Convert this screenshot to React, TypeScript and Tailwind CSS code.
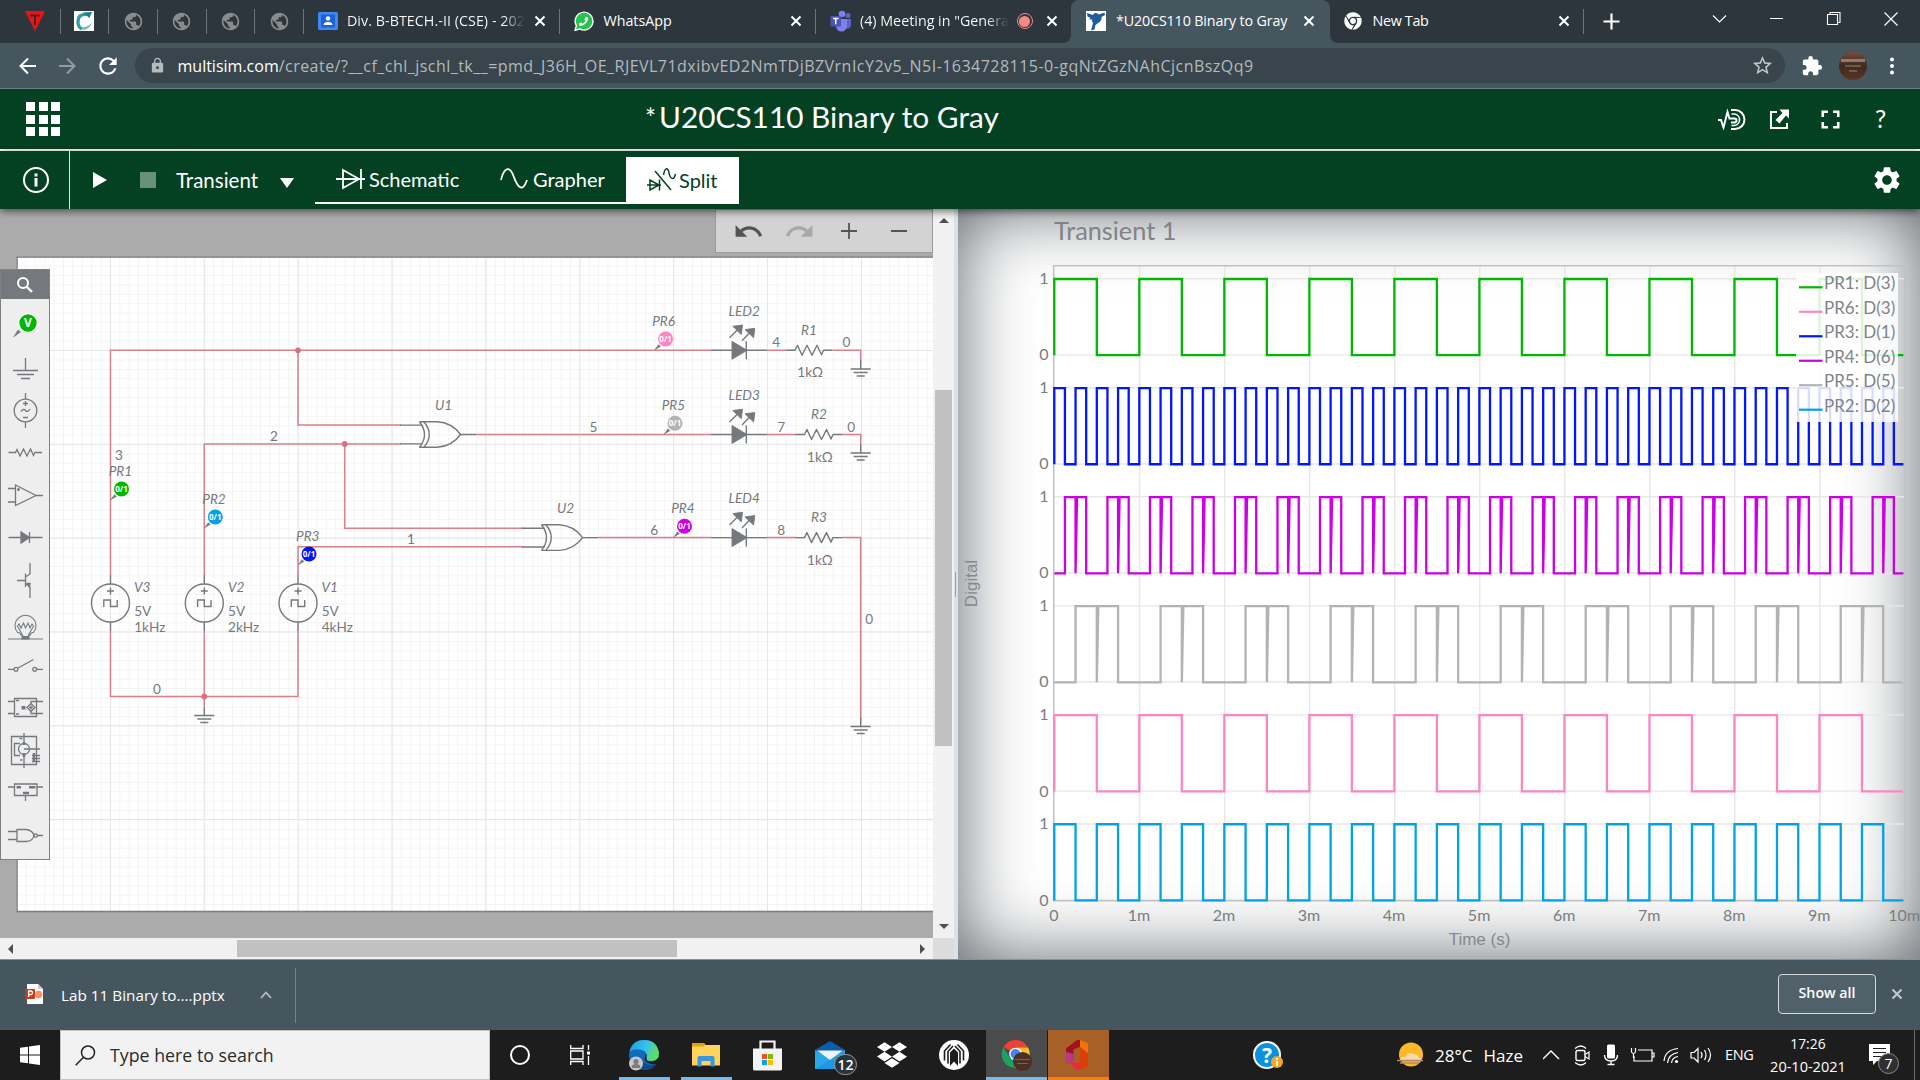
import { type ReactNode } from "react";
import { FaChrome, FaDropbox, FaPhoneAlt } from "react-icons/fa";
import {
  MdExtension,
  MdFullscreen,
  MdLock,
  MdOutlineStarBorder,
  MdPublic,
  MdRedo,
  MdRefresh,
  MdSettings,
  MdUndo,
} from "react-icons/md";

/* ---------- Browser tab strip ---------- */

function Cross({ className = "" }: { className?: string }) {
  return (
    <svg viewBox="0 0 12 12" className={`h-3 w-3 shrink-0 ${className}`} stroke="currentColor" strokeWidth="2" fill="none">
      <path d="M1.5 1.5 10.5 10.5M10.5 1.5 1.5 10.5" />
    </svg>
  );
}

function TabDivider() {
  return <span className="absolute right-0 h-[25px] w-px bg-[#68757c]" />;
}

function PinnedTab({ children }: { children: ReactNode }) {
  return (
    <div className="relative flex h-full w-[48.7px] items-center justify-center pr-px">
      {children}
      <TabDivider />
    </div>
  );
}

function WhatsAppIcon() {
  return (
    <span className="relative flex h-5 w-5 items-center justify-center">
      <svg viewBox="0 0 20 20" className="absolute inset-0">
        <path d="M1 19.5 2.4 14.6A8.9 8.9 0 1 1 5.8 17.9Z" fill="#27c24c" stroke="#fff" strokeWidth="1.4" />
      </svg>
      <FaPhoneAlt className="relative h-[9px] w-[9px] -scale-x-100 text-white" />
    </span>
  );
}

function TeamsIcon() {
  return (
    <svg viewBox="0 0 22 22" className="h-[22px] w-[22px]">
      <circle cx="18" cy="5.5" r="2.6" fill="#5b63c9" />
      <circle cx="12" cy="4" r="3.3" fill="#7b83eb" />
      <path d="M15 9h6v6a3.6 3.6 0 0 1-5 3.3Z" fill="#5b63c9" />
      <path d="M6 9h11v7a5.5 5.5 0 0 1-11 0Z" fill="#7b83eb" />
      <rect x="0.5" y="6" width="10.5" height="10.5" rx="1" fill="#4b53bc" />
      <path d="M3 8.6h5.5M5.75 8.6v5.6" stroke="#fff" strokeWidth="1.5" />
    </svg>
  );
}

function TabStrip() {
  return (
    <div className="flex h-[43px] items-center whitespace-nowrap bg-[#2c363c] pb-px text-[14.3px] text-white">
      <div className="relative flex h-full w-[60.5px] items-center pl-[25px]">
        <svg viewBox="0 0 20 20" className="h-5 w-5">
          <path d="M0 0H20L10 20Z" fill="#f60f0f" />
          <path d="M5 4.5H15M10 4.5V14" stroke="#3a2a2c" strokeWidth="2" />
        </svg>
        <TabDivider />
      </div>
      <PinnedTab>
        <svg viewBox="0 0 20 20" className="h-5 w-5 bg-white">
          <path d="M14 3.5Q4 2 4 11q0 5 4 7" fill="none" stroke="#2c9c9c" strokeWidth="3.2" />
          <path d="M18 1 9 1.5 15.5 7Z" fill="#1d7f86" />
          <path d="M7 16q6 1 11-4-3 7-9 7Z" fill="#6fbdb8" />
        </svg>
      </PinnedTab>
      {[0, 1, 2, 3].map((i) => (
        <PinnedTab key={i}>
          <MdPublic className="h-[21px] w-[21px] text-[#8b8b8b]" />
        </PinnedTab>
      ))}
      <div className="relative flex h-full w-[256px] items-center pl-[14px]">
        <svg viewBox="0 0 20 18" className="h-[18px] w-5">
          <rect width="20" height="18" rx="1.5" fill="#4285f4" />
          <rect x="3" y="2.5" width="14" height="13" fill="#1a62d6" />
          <circle cx="10" cy="6.5" r="2.2" fill="#fff" />
          <path d="M5.5 13q0-3 4.5-3t4.5 3Z" fill="#fff" />
        </svg>
        <span className="ml-[9px] w-[178px] overflow-hidden bg-linear-to-r from-white from-88% to-[#2c363c] bg-clip-text tracking-[0.04px] text-transparent">
          Div. B-BTECH.-II (CSE) - 202
        </span>
        <Cross className="ml-[9px]" />
        <TabDivider />
      </div>
      <div className="relative flex h-full w-[256px] items-center pl-[14px]">
        <WhatsAppIcon />
        <span className="ml-[9.5px]">WhatsApp</span>
        <Cross className="ml-auto mr-[14px]" />
        <TabDivider />
      </div>
      <div className="-mb-px flex h-[43px] w-[255px] items-center bg-[#45565f]">
        <div className="flex h-full w-full items-center rounded-br-lg bg-[#2c363c] pb-px pl-[14px]">
          <TeamsIcon />
          <span className="ml-[8px] w-[149px] overflow-hidden bg-linear-to-r from-white from-85% to-[#2c363c] bg-clip-text text-transparent">
            (4) Meeting in "Genera
          </span>
          <span className="ml-[8px] flex h-4 w-4 items-center justify-center rounded-full border-[1.5px] border-[#f28b82]">
            <span className="h-[11px] w-[11px] rounded-full bg-[#f28b82]" />
          </span>
          <Cross className="ml-auto mr-[13px]" />
        </div>
      </div>
      <div className="-mb-px flex h-[43px] w-[259px] items-center rounded-t-lg bg-[#45565f] pb-px pl-[15px]">
        <svg viewBox="0 0 20 20" className="h-5 w-5 bg-white">
          <path d="M1 2 7 4Q8 1.5 10 2t3 1.5L18.5 1.5 19 4 15.5 6Q16 10 12 12L9.5 14 8.5 18.5 5 19.5 6.5 14Q7.5 11 5.5 10 7 9.5 6 8.5L3 8.5 4.5 7 1.5 5.5Z" fill="#1f5c9e" />
        </svg>
        <span className="ml-[10px] tracking-[-0.14px]">*U20CS110 Binary to Gray</span>
        <Cross className="ml-auto mr-[15px]" />
      </div>
      <div className="-mb-px flex h-[43px] flex-1 items-center bg-[#45565f]">
        <div className="flex h-full w-full items-center rounded-bl-lg bg-[#2c363c] pb-px">
          <div className="relative flex h-full w-[254px] items-center pl-[14px]">
            <FaChrome className="h-[18px] w-[18px]" />
            <span className="ml-[10.5px] tracking-[-0.3px]">New Tab</span>
            <Cross className="ml-auto mr-[14px]" />
            <TabDivider />
          </div>
          <svg viewBox="0 0 336 43" className="h-[43px] w-[336px]" fill="none" stroke="#fff">
            <path d="M19.500 21.500h16M27.500 13.500v16" strokeWidth="2.2" />
            <path d="M129 15.500l6.500 6.500 6.500-6.500M186 18.500h13" strokeWidth="1.1" />
            <path d="M243.500 14.500h10v10h-10zM246 14.500v-2h10v10h-2.500" strokeWidth="1.1" />
            <path d="M300.500 12.500l13 13M313.500 12.500l-13 13" strokeWidth="1.2" />
          </svg>
        </div>
      </div>
    </div>
  );
}

function AddressBar() {
  return (
    <div className="flex h-[46px] items-center border-b border-[#6e7c83] bg-[#45565f] text-white">
      <svg viewBox="0 0 90 30" className="h-[30px] w-[90px]" fill="none" strokeWidth="2">
        <path d="M36 15H20.500M28 7.500 20.500 15l7.500 7.500" stroke="#fff" />
        <path d="M59 15h15.500M67 7.500l7.500 7.500-7.500 7.500" stroke="#919b9f" />
      </svg>
      <MdRefresh className="ml-[5px] h-[26px] w-[26px]" />
      <div className="ml-[14px] flex h-[35px] w-[1650px] items-center rounded-full bg-[#39454c] pl-[14px]">
        <MdLock className="h-[17px] w-[17px] text-[#b4b9bb]" />
        <div className="ml-[11.5px] flex whitespace-nowrap text-[16px] text-[#b3b9bc]">
          <span className="text-white">multisim.com</span>
          <span className="tracking-[0.47px]">
            /create/?__cf_chl_jschl_tk__=pmd_J36H_OE_RJEVL71dxibvED2NmTDjBZVrnIcY2v5_N5I-1634728115-0-gqNtZGzNAhCjcnBszQq9
          </span>
        </div>
        <MdOutlineStarBorder className="ml-auto mr-[11px] h-[23px] w-[23px] text-[#c3c8ca]" />
      </div>
      <MdExtension className="ml-[16px] h-[22px] w-[22px]" />
      <div className="ml-[16px] flex h-7 w-7 flex-col items-center justify-center gap-[3px] rounded-full bg-linear-to-b from-[#7a4a35] via-[#3d2b1e] to-[#5b3524]">
        <span className="h-[3px] w-6 bg-[#cbbfb8]/50" />
        <span className="h-[2px] w-4 bg-[#a4836c]/50" />
        <span className="h-[2px] w-2 bg-[#a4836c]/50" />
      </div>
      <svg viewBox="0 0 6 20" className="ml-[22px] h-5 w-[6px] fill-white">
        <circle cx="3" cy="3.5" r="2" />
        <circle cx="3" cy="10" r="2" />
        <circle cx="3" cy="16.5" r="2" />
      </svg>
    </div>
  );
}

/* ---------- Application header ---------- */

function AppHeader() {
  return (
    <div className="flex h-[62px] items-center border-b-2 border-white bg-[#044123] font-['Lato'] text-white">
      <div className="ml-[26px] grid w-[34px] grid-cols-3 gap-[3.5px]">
        {Array.from({ length: 9 }, (_, i) => (
          <span key={i} className="h-[9px] bg-white" />
        ))}
      </div>
      <h1 className="mb-[4px] ml-[585px] flex items-baseline whitespace-nowrap text-[29.8px]">
        <span className="mr-[3px] text-[26px]">*</span>U20CS110 Binary to Gray
      </h1>
      <svg viewBox="0 0 30 22" className="ml-auto h-[22px] w-[30px]" fill="none" stroke="#fff" strokeWidth="2">
        <path d="M1 12h3l2.500 7.500L10.500 4l2 6.500h5a2 2 0 0 1 0 4h-3.500" />
        <path d="M14.500 6h3a5.800 5.800 0 0 1 0 11.500h-3" strokeWidth="1.6" />
        <path d="M14 2h4a9.500 9.500 0 0 1 0 19h-4" strokeWidth="2" />
      </svg>
      <svg viewBox="0 0 22 22" className="ml-[22px] h-[22px] w-[22px]" fill="none" stroke="#fff" strokeWidth="2">
        <path d="M8 4H2v16h16v-5" />
        <path d="M10.500 1.500H20v9l-3-3-6.500 8-4-3.500L13.500 5Z" fill="#fff" stroke="none" />
      </svg>
      <MdFullscreen className="ml-[24px] h-[31px] w-[31px]" />
      <span className="ml-[29px] mr-[33px] w-3 text-[25px]">?</span>
    </div>
  );
}

function ModeTab({ children }: { children: ReactNode }) {
  return <div className="flex h-full items-center border-b-2 border-white">{children}</div>;
}

function AppToolbar() {
  return (
    <div className="relative z-10 flex h-[58px] items-center bg-[#044123] font-['Lato'] text-[20px] text-white shadow-[0_2px_8px_rgba(0,0,0,0.6)]">
      <div className="flex h-full w-[70px] items-center border-r border-[#dfe8e3] pl-[22px]">
        <svg viewBox="0 0 28 28" className="h-7 w-7" fill="none" stroke="#fff">
          <circle cx="14" cy="14" r="12" strokeWidth="2" />
          <path d="M14 12v8.500M14 7.500v3" strokeWidth="3" />
        </svg>
      </div>
      <svg viewBox="0 0 16 16" className="ml-[23px] h-4 w-[14px] fill-white" preserveAspectRatio="none">
        <path d="M0 0 16 8 0 16Z" />
      </svg>
      <span className="ml-[33px] h-4 w-4 bg-[#688f79]" />
      <span className="ml-[20px] mt-px w-[82px] text-[20.5px]">Transient</span>
      <svg viewBox="0 0 14 10" className="ml-[21.5px] mt-[5px] h-[10px] w-[14px] fill-white">
        <path d="M0 0H14L7 10Z" />
      </svg>
      <div className="ml-[21.5px] flex h-[47px] items-center">
        <ModeTab>
          <div className="flex w-[165px] items-center pl-[21px]">
            <svg viewBox="0 0 29 22" className="mr-1 h-[22px] w-[29px]" fill="none" stroke="#fff" strokeWidth="1.8">
              <path d="M0 11h29M7 2v18L23 11ZM25 1v20" />
            </svg>
            <span>Schematic</span>
          </div>
        </ModeTab>
        <ModeTab>
          <div className="flex w-[146px] items-center pl-[20px]">
            <svg viewBox="0 0 30 22" className="mr-1 h-[22px] w-[29px]" fill="none" stroke="#fff" strokeWidth="1.8">
              <path d="M1 12C4-1 10-3 14 8S23 26 28 12" />
            </svg>
            <span>Grapher</span>
          </div>
        </ModeTab>
        <div className="flex h-full w-[113px] items-center bg-white pl-[21px] text-[#044123]">
          <svg viewBox="0 0 29 24" className="mr-[3px] h-6 w-[29px]" fill="none" stroke="#044123" strokeWidth="1.5">
            <path d="M8 3 24 22M0 17h14M3 12v10l9-5ZM12.500 11.500v11M16.500 7C18-1 21-1 22 5s5 8 6.500 1" />
          </svg>
          <span className="mb-px">Split</span>
        </div>
      </div>
      <MdSettings className="ml-auto mr-[17.5px] h-8 w-8" />
    </div>
  );
}

/* ---------- Schematic editor ---------- */

const GRAY = "#75797d";
const WIRE = "#d9808b";

function Ground({ x, y }: { x: number; y: number }) {
  return <path d={`M${x} ${y - 9}V${y}M${x - 10} ${y}h20M${x - 7} ${y + 3.5}h14M${x - 4} ${y + 7}h8`} />;
}

function XorGate({ x, y }: { x: number; y: number }) {
  return (
    <g transform={`translate(${x} ${y})`}>
      <path d="M-20.500-12.800H-3Q12-12 20.500 0 12 12 -3 12.800H-20.500" />
      <path d="M-20.500-12.800Q-10.500 0-20.500 12.800M-16-12.800Q-5.500 0-16 12.800" />
      <path d="M-40-9.400h22.500M-40 9.400h22.500M20.500 0H36" />
    </g>
  );
}

function Led({ y }: { y: number }) {
  return (
    <g transform={`translate(0 ${y})`}>
      <path d="M711 0h56M746.300-9V9M729.500-12.500 740-23M742-9.500 752-20" />
      <path
        d="M732-9 747 0 732 9ZM742.500-25.300 741.300-15.800 732.800-24ZM754.800-22 753.600-12.500 745-20.700Z"
        fill={GRAY}
        strokeWidth="0.9"
      />
    </g>
  );
}

function Resistor({ x, y }: { x: number; y: number }) {
  return <path d={`M${x - 9} ${y}h9l2.500-5 4.500 10 5-10 5 10 5-10 4.500 9.500 2-4.500h9`} strokeLinejoin="round" />;
}

function Source({ x }: { x: number }) {
  return (
    <g transform={`translate(${x} 603)`}>
      <circle r="19" />
      <path d="M0-28V-19M0 19V28M-3.500-12h7M0-15.500v7M-6.700 4V-3H0V3.500H6.700V-3" />
    </g>
  );
}

const PROBES = [
  { name: "PR1", x: 121.5, y: 489, tx: 108.7, ty: 476, color: "#00b800" },
  { name: "PR2", x: 215.3, y: 517, tx: 202.3, ty: 504, color: "#00a2e8" },
  { name: "PR3", x: 309, y: 554, tx: 296, ty: 541, color: "#0016ff" },
  { name: "PR4", x: 684.5, y: 526.3, tx: 671.2, ty: 513, color: "#cc00e6" },
  { name: "PR5", x: 675, y: 423.2, tx: 661.7, ty: 410, color: "#b3b3b3" },
  { name: "PR6", x: 665.6, y: 339, tx: 652.2, ty: 326, color: "#ff85c2" },
];

const ITALIC_LABELS: [string, number, number][] = [
  ["U1", 435, 410], ["U2", 557, 513], ["LED2", 728.5, 316], ["LED3", 728.5, 400], ["LED4", 728.5, 503],
  ["R1", 801, 335], ["R2", 811, 419], ["R3", 811, 522], ["V3", 134, 592], ["V2", 228, 592], ["V1", 321.5, 592],
];

const LABELS: [string, number, number][] = [
  ["2", 270, 441], ["3", 115, 460], ["1", 407, 544], ["0", 153, 693.5], ["4", 772.3, 347], ["0", 842.5, 347],
  ["5", 589.5, 432], ["7", 777.3, 432], ["0", 847.3, 432], ["6", 650.3, 535], ["8", 777.3, 535], ["0", 865.2, 624],
  ["1kΩ", 797.3, 377], ["1kΩ", 807, 462], ["1kΩ", 807, 565],
  ["5V", 134.2, 616], ["1kHz", 134.2, 632], ["5V", 228, 616], ["2kHz", 228, 632], ["5V", 321.7, 616], ["4kHz", 321.7, 632],
];

const MINOR_GRID = 9.388;

function Schematic() {
  const columns = Array.from({ length: 98 }, (_, i) => 16.5 + i * MINOR_GRID);
  const rows = Array.from({ length: 70 }, (_, i) => 256.7 + i * MINOR_GRID);
  return (
    <svg viewBox="0 209 933 729" className="block h-[729px] w-[933px] bg-[#ababab]" fill="none">
      <rect x="17" y="257" width="930" height="654.5" fill="#fff" />
      <g stroke="#f4f4f4">
        <path d={columns.map((x) => `M${x} 258V911`).join("")} />
        <path d={rows.map((y) => `M17 ${y}H933`).join("")} />
      </g>
      <path
        stroke="#e4e5e6"
        d={
          Array.from({ length: 9 }, (_, i) => `M${110.4 + i * 93.88} 258V911`).join("") +
          Array.from({ length: 6 }, (_, i) => `M17 ${350.5 + i * 93.8}H933`).join("")
        }
      />
      <rect x="17" y="257" width="930" height="654.5" stroke="#7d8184" strokeWidth="1.6" />

      <g stroke={WIRE} strokeWidth="1.5">
        <path d="M110.500 575V350.300H711M298 350V425H401M204.300 575V444H401M344.700 444V528.200H523M298 575V546.700H523" />
        <path d="M476 434.500H711M598 537.600H711M767 350.300H786M767 434.500H796M767 537.600H796" />
        <path d="M833 350.300H860.700V360M842 434.500H860.700V444M842 537.600H860.700V718" />
        <path d="M110.500 631V696.500H298V631M204.300 631V706" />
      </g>
      <g fill="#d4737f">
        <circle cx="298" cy="350.3" r="2.9" />
        <circle cx="344.7" cy="444" r="2.9" />
        <circle cx="204.3" cy="696.5" r="2.9" />
      </g>
      <g stroke={GRAY} strokeWidth="1.4">
        <XorGate x={440} y={434.5} />
        <XorGate x={562} y={537.6} />
        <Led y={350.3} />
        <Led y={434.5} />
        <Led y={537.6} />
        <Resistor x={795} y={350.3} />
        <Resistor x={804.5} y={434.5} />
        <Resistor x={804.5} y={537.6} />
        <Ground x={860.7} y={369} />
        <Ground x={860.7} y={453} />
        <Ground x={860.7} y={726.5} />
        <Ground x={204.3} y={715.5} />
        <Source x={110.5} />
        <Source x={204.3} />
        <Source x={298} />
      </g>
      {PROBES.map((p) => (
        <g key={p.name}>
          <path d={`M${p.x - 11} ${p.y + 11}l4-5.500 2 2Z`} fill={GRAY} stroke={GRAY} strokeWidth="0.4" />
          <circle cx={p.x} cy={p.y} r="7.5" fill={p.color} />
          <text x={p.x} y={p.y + 3} textAnchor="middle" className="fill-white font-['Noto_Sans'] text-[8px] font-bold">0/1</text>
        </g>
      ))}
      <g fill={GRAY} className="font-['Lato'] text-[13.6px]">
        {PROBES.map((p) => (
          <text key={p.name} x={p.tx} y={p.ty} className="italic">{p.name}</text>
        ))}
        {ITALIC_LABELS.map(([t, x, y]) => (
          <text key={t} x={x} y={y} className="italic">{t}</text>
        ))}
        {LABELS.map(([t, x, y], i) => (
          <text key={i} x={x} y={y}>{t}</text>
        ))}
      </g>
    </svg>
  );
}

function PartsPalette() {
  return (
    <div className="absolute left-0 top-[60px] flex h-[591px] w-[50px] flex-col border border-[#7d8184] bg-[#eee]">
      <div className="flex h-[29px] shrink-0 items-center justify-center bg-[#75797d]">
        <svg viewBox="0 0 16 16" className="h-4 w-4" fill="none" stroke="#fff" strokeWidth="2">
          <circle cx="6" cy="6" r="5" />
          <path d="M9.500 9.500 15 15" strokeWidth="2.4" />
        </svg>
      </div>
      <svg viewBox="1 299 48 559" className="block h-[559px] w-12" fill="none" stroke={GRAY} strokeWidth="1.3">
        <path d="M13.500 337 18 330 20.500 332Z" fill={GRAY} strokeWidth="0.5" />
        <circle cx="28" cy="323" r="9.3" fill="#00b800" stroke="#fff" strokeWidth="1.2" />
        <text x="28" y="327.3" textAnchor="middle" className="fill-white stroke-none font-['Noto_Sans'] text-[12px] font-bold">V</text>
        <path d="M25.500 358V370.500M13 370.500H38M17 374.500H34M21 378.500H30" />
        <circle cx="25.5" cy="410.5" r="11.3" />
        <path d="M25.500 393v6M25.500 422v6M23 403.500h5M25.500 401v5M23 417.500h5M21 411.500q2.500-3.500 4.500-1t4.500-1.500" />
        <path d="M8.500 452.500h7l1.500-3 3 6.500 3.500-7 3.500 7 3.500-7 3 6.500 1.500-3h7" />
        <path d="M15.500 485V505.500L36 495.500ZM8 488.500h7.500M8 502h7.500M36 495.500h7M17 489.500h3M18.500 488v3" />
        <path d="M8.500 537.500H42.500M29.500 532v11" />
        <path d="M21 532v11l8.500-5.500Z" fill={GRAY} />
        <path d="M30 563V574L25.500 577M25.500 573.500V587M17 580.500H25.500M25.500 583.500 30 587V598" />
        <path d="M26.500 583 30.500 583 29.500 588Z" fill={GRAY} strokeWidth="0.5" />
        <path d="M8 639H43M21.500 636Q20 632 17.500 632.500A10.500 10.500 0 1 1 33.500 632.500Q31 632 29.500 636M17 627l2-3 2 4 2.500-5 2 5 2.500-5 2 5 2-4 2 3M18 627 23 636M33 627 28 636" strokeWidth="1.1" />
        <rect x="21.5" y="636" width="8" height="3.5" fill={GRAY} stroke="none" />
        <path d="M8 669.300h6M37 669.300h6M18 668 33.500 659.500" />
        <circle cx="16" cy="669.3" r="1.9" />
        <circle cx="34.7" cy="669.3" r="1.9" />
        <path d="M14.500 698.500H36.500V716.500H14.500ZM8 701.500h7M8 713.500h7M43 701.500H31V703.500M43 713.500H31V711.500M31 703.500l4 4-4 4-4-4ZM29 707.500h4M31 705.500v4" />
        <path d="M16 700.500h3M16 714h3" />
        <rect x="21.5" y="706" width="4" height="3.5" fill={GRAY} stroke="none" />
        <path d="M11.500 736.500H36.500V764.500H11.500ZM24 733V744M24 754V768M24 749H40M20 743.500H14.500V755.500H20M32 755.500h8M32 758.500h8M32 761.500h8M19.500 738.500h3M20 760h2.500" />
        <circle cx="24" cy="749" r="5.5" />
        <path d="M24 742v3M24 753v4M34 753v9" strokeWidth="2.5" />
        <path d="M14.500 784H37V795.500H14.500ZM8 787h6.500M37 787h6M25.500 795.500V801" />
        <path d="M16.500 787.300h4.500M29 787.300h6.500M23 793h6" strokeWidth="2.5" />
        <path d="M17 829.500h9q7 1 8 6-1 5.500-8 6H17ZM8 831.500h9M8 839.500h9M37.500 835.500H43" />
        <circle cx="35.8" cy="835.5" r="1.7" />
      </svg>
    </div>
  );
}

function ZoomToolbar() {
  return (
    <div className="absolute right-0 top-0 flex h-[44px] w-[218px] items-center border border-[#9b9b9b] bg-[#d3d3d3]">
      <MdUndo className="ml-[17px] h-[31px] w-[31px] text-[#525456]" />
      <MdRedo className="ml-[20px] h-[31px] w-[31px] text-[#a8a9aa]" />
      <svg viewBox="0 0 70 16" className="ml-[26px] h-4 w-[70px]" fill="none" stroke="#525456" strokeWidth="1.8">
        <path d="M0 8h16M8 0v16M50 8h16" />
      </svg>
    </div>
  );
}

function SchematicPane() {
  return (
    <div className="grid h-[750px] w-[954px] grid-cols-[933px_21px] grid-rows-[729px_21px]">
      <div className="relative">
        <Schematic />
        <ZoomToolbar />
        <PartsPalette />
      </div>
      <div className="flex flex-col items-center bg-[#f1f1f1]">
        <svg viewBox="0 0 10 5" className="mt-[9px] h-[5px] w-[10px] fill-[#505050]"><path d="M0 5 5 0 10 5Z" /></svg>
        <div className="mt-[167px] h-[356px] w-[17px] bg-[#c1c1c1]" />
        <svg viewBox="0 0 10 5" className="mb-[9px] mt-auto h-[5px] w-[10px] fill-[#505050]"><path d="M0 0 5 5 10 0Z" /></svg>
      </div>
      <div className="flex items-center bg-[#f1f1f1]">
        <svg viewBox="0 0 5 10" className="ml-2 h-[10px] w-[5px] fill-[#505050]"><path d="M5 0 0 5 5 10Z" /></svg>
        <div className="ml-[224px] h-[17px] w-[440px] bg-[#c1c1c1]" />
        <svg viewBox="0 0 5 10" className="ml-auto mr-2 h-[10px] w-[5px] fill-[#505050]"><path d="M0 0 5 5 0 10Z" /></svg>
      </div>
      <div className="bg-[#dcdcdc]" />
    </div>
  );
}

/* ---------- Grapher ---------- */

const X0 = 1054.3;
const MS = 85.02;
const ROW_H = 109.05;
const HIGH = 279;
const AMP = 76.2;

function square(row: number, period: number) {
  const hi = HIGH + row * ROW_H;
  const lo = hi + AMP;
  let d = `M${X0} ${lo}`;
  for (let i = 0; i < Math.round(10 / period); i++) {
    const x = X0 + i * period * MS;
    d += `L${x} ${lo}V${hi}H${x + (period / 2) * MS}V${lo}`;
  }
  return `${d}H${X0 + 10 * MS - 1}`;
}

/* Exclusive-or outputs: a centred pulse with a glitch to zero in its middle. */
function pulse(row: number, period: number) {
  const hi = HIGH + row * ROW_H;
  const lo = hi + AMP;
  let d = `M${X0} ${lo}`;
  for (let i = 0; i < Math.round(10 / period); i++) {
    const x = X0 + i * period * MS;
    const q = (period / 4) * MS;
    d += `H${x + q}V${hi}H${x + 2 * q}V${lo}L${x + 2 * q + 1.5} ${hi}H${x + 3 * q}V${lo}`;
  }
  return `${d}H${X0 + 10 * MS - 1}`;
}

const TRACES = [
  { color: "#00b800", d: square(0, 1) },
  { color: "#0016ff", d: square(1, 0.25) },
  { color: "#cc00e6", d: pulse(2, 0.5) },
  { color: "#b3b3b3", d: pulse(3, 1) },
  { color: "#ff85c2", d: square(4, 1) },
  { color: "#00a2e8", d: square(5, 0.5) },
];

const LEGEND = [
  ["PR1: D(3)", "#00b800"],
  ["PR6: D(3)", "#ff85c2"],
  ["PR3: D(1)", "#0016ff"],
  ["PR4: D(6)", "#cc00e6"],
  ["PR5: D(5)", "#b3b3b3"],
  ["PR2: D(2)", "#00a2e8"],
];

function GrapherPane() {
  return (
    <div className="relative h-[750px] w-[962px] bg-white shadow-[inset_0_0_75px_#5b6066]">
      <svg viewBox="958 209 962 750" className="block h-[750px] w-[962px] font-['Lato']" fill="none">
        <text x="1054" y="240" className="fill-[#808388] text-[25.3px]">Transient 1</text>
        <g stroke="#e7e7e8" strokeWidth="1.4">
          <path d={Array.from({ length: 9 }, (_, i) => `M${X0 + (i + 1) * MS + 0.3} 266V900`).join("")} />
          <path d={TRACES.map((_, i) => `M1054 ${HIGH - 0.3 + i * ROW_H}H1905M1054 ${HIGH + AMP - 0.3 + i * ROW_H}H1905`).join("")} />
        </g>
        <rect x="1053.7" y="265.7" width="851" height="635" stroke="#bfc1c3" strokeWidth="1.5" />
        {TRACES.map((t) => (
          <path key={t.color} d={t.d} stroke={t.color} strokeWidth="2.3" />
        ))}
        <g className="fill-[#7a7d80] text-[16px]">
          {TRACES.map((_, i) => (
            <g key={i} textAnchor="end">
              <text x="1048.5" y={284 + i * ROW_H}>1</text>
              <text x="1048.5" y={360.3 + i * ROW_H}>0</text>
            </g>
          ))}
          {Array.from({ length: 11 }, (_, i) => (
            <text key={i} x={X0 + i * MS - 0.3} y="921" textAnchor="middle">{i === 0 ? "0" : `${i}m`}</text>
          ))}
        </g>
        <g textAnchor="middle" className="fill-[#85888c] font-['Liberation_Sans'] text-[17px]">
          <text x="1479.5" y="944.5">Time (s)</text>
          <text transform="translate(977 583.5) rotate(-90)">Digital</text>
        </g>
        <rect x="1796" y="273" width="102" height="149" fill="#fff" fillOpacity="0.85" />
        {LEGEND.map(([name, color], i) => (
          <g key={name}>
            <path d={`M1799 ${287.3 + i * 24.48}h23.500`} stroke={color} strokeWidth="2.2" />
            <text x="1824" y={289 + i * 24.5} className="fill-[#808388] text-[17px]">{name}</text>
          </g>
        ))}
      </svg>
    </div>
  );
}

/* ---------- Download shelf ---------- */

function DownloadShelf() {
  return (
    <div className="flex h-[71px] items-center border-t border-[#84939a] bg-[#45565f] text-white">
      <div className="flex h-[55px] w-[296px] items-center border-r border-[#74828a] pl-[25px]">
        <svg viewBox="0 0 18 20" className="mb-[3px] h-5 w-[18px]">
          <path d="M2 0h11l5 5v15H2Z" fill="#fff" />
          <path d="M13 0v5h5Z" fill="#c9c9c9" />
          <circle cx="13.5" cy="10.5" r="3.8" fill="#ff8f6b" />
          <rect y="5" width="10" height="10" rx="1" fill="#c43e1c" />
          <path d="M3.700 13V7h2a1.700 1.700 0 0 1 0 3.600h-2" fill="none" stroke="#fff" strokeWidth="1.3" />
        </svg>
        <span className="ml-[18px] w-[163px] whitespace-nowrap text-[15.3px]">Lab 11 Binary to....pptx</span>
        <svg viewBox="0 0 12 8" className="ml-[36px] h-2 w-3" fill="none" stroke="#b9c0c3" strokeWidth="1.8">
          <path d="M1 7 6 1.500 11 7" />
        </svg>
      </div>
      <button className="mb-[3px] ml-auto flex h-10 w-[98px] items-center justify-center rounded border border-[#d4dadc] bg-[#50616a] pb-px text-[14.2px] font-semibold">
        Show all
      </button>
      <Cross className="mb-[2px] ml-[15px] mr-[17px] text-[#c3cacd]" />
    </div>
  );
}

/* ---------- Windows taskbar ---------- */

function Task({ className = "", bar = "", children }: { className?: string; bar?: string; children: ReactNode }) {
  return (
    <div className={`relative flex h-full items-center justify-center ${className}`}>
      {children}
      {bar && <span className={`absolute bottom-0 h-[3px] ${bar}`} />}
    </div>
  );
}

function Taskbar() {
  return (
    <div className="flex h-[50px] items-center bg-[#1d1d1d] text-white">
      <Task className="w-[60px]">
        <svg viewBox="0 0 20 20" className="h-5 w-5 fill-white">
          <path d="M0 2.800 8 1.700V9.500H0ZM9 1.500 20 0V9.500H9ZM0 10.500H8v7.800L0 17.200ZM9 10.500H20V20L9 18.500Z" />
        </svg>
      </Task>
      <div className="flex h-full w-[430px] items-center border border-[#c4c4c4] bg-[#f2f2f2] pl-[14px] text-[#2b2b2b]">
        <svg viewBox="0 0 21 21" className="h-[21px] w-[21px]" fill="none" stroke="#222" strokeWidth="1.5">
          <circle cx="13" cy="7.5" r="6.5" />
          <path d="M8.500 12.300.7 20.300" />
        </svg>
        <span className="ml-[14px] whitespace-nowrap text-[17.8px]">Type here to search</span>
      </div>
      <Task className="w-[60px]">
        <span className="h-[20px] w-[20px] rounded-full border-[2.5px] border-white" />
      </Task>
      <Task className="w-[60px]">
        <svg viewBox="0 0 20 20" className="h-5 w-5" fill="none" stroke="#fff" strokeWidth="1.3">
          <path d="M.7 0V3.500H13V0M.7 20V16.500H13V20M.7 6H13v8H.7ZM18.500 0V5M18.500 11v9" />
          <rect x="17" y="6.5" width="3" height="3" fill="#fff" stroke="none" />
        </svg>
      </Task>
      <Task className="w-[68px]" bar="left-[9px] w-[51px] bg-[#76b9ed]">
        <svg viewBox="0 0 32 32" className="h-8 w-8">
          <defs>
            <linearGradient id="edgeTop" x1="0" x2="1" y1="0" y2="0.3">
              <stop offset="0" stopColor="#1b9de2" />
              <stop offset="0.6" stopColor="#35c1f1" />
              <stop offset="1" stopColor="#5fe05a" />
            </linearGradient>
          </defs>
          <circle cx="16" cy="16" r="15" fill="#0f6cbd" />
          <path d="M1.500 13Q4 1 16 1q13 0 15 13 0 8-8 8-6 0-4.500-3Q20 13 14 11 5 9 1.500 13Z" fill="url(#edgeTop)" />
          <path d="M13.500 18q1 8 9 8 4 0 6.500-2-5 8-13 7-8-3-2.500-13Z" fill="#114a8b" />
          <path d="M18.500 19Q18 23 23 22.500 28 22.500 30.500 18v6l-3 1q-9 1-11-5 0-4 2-5Z" fill="#1d1d1d" />
          <circle cx="8" cy="24.5" r="7" fill="#c8c8c8" />
          <circle cx="8" cy="22.5" r="2.6" fill="#7e7a78" />
          <path d="M3.500 29q0-4 4.500-4t4.500 4Z" fill="#7e7a78" />
        </svg>
      </Task>
      <Task className="w-[57px]" bar="left-[3px] w-[51px] bg-[#76b9ed]">
        <svg viewBox="0 0 28 24" className="mr-[1px] h-6 w-7">
          <path d="M0 0h12l2 2v3H0Z" fill="#e3a008" />
          <path d="M0 3.500h11L13 2h15v20.500H0Z" fill="#ffd35c" />
          <path d="M5.500 23.500V15q0-2 2-2h13q2 0 2 2v8.500h-4V18h-9v5.500Z" fill="#3a96dd" />
        </svg>
      </Task>
      <Task className="w-[65px]">
        <svg viewBox="0 0 29 31" className="h-[31px] w-[29px]">
          <path d="M7.500 9V1.500h14V9" fill="none" stroke="#f3f3f3" strokeWidth="2.2" />
          <path d="M0 8.500h29V29q0 1.500-1.500 1.500h-26Q0 30.500 0 29Z" fill="#f3f3f3" />
          <path d="M9 14h5v5H9Z" fill="#f25022" />
          <path d="M15 14h5v5h-5Z" fill="#7fba00" />
          <path d="M9 20h5v5H9Z" fill="#00a4ef" />
          <path d="M15 20h5v5h-5Z" fill="#ffb900" />
        </svg>
      </Task>
      <Task className="w-[60px]">
        <svg viewBox="0 0 30 28" className="mb-px h-7 w-[30px]">
          <path d="M0 9 15 0 30 9V28H0Z" fill="#0b5cad" />
          <path d="M0 9 15 17.500 30 9V28H0Z" fill="#28a8ea" />
          <path d="M2 9.500h26L15 19Z" fill="#eef3f7" />
          <path d="M0 28 30 10V28Z" fill="#1490df" fillOpacity="0.6" />
        </svg>
        <span className="absolute left-[34px] top-[24px] flex h-[21px] w-[23px] items-center justify-center rounded-full border border-[#9a9a9a] bg-[#27343c] font-['Open_Sans'] text-[14px] font-semibold">
          12
        </span>
      </Task>
      <Task className="w-[64px]">
        <FaDropbox className="h-[30px] w-[30px]" />
      </Task>
      <Task className="w-[60px]">
        <svg viewBox="0 0 30 30" className="h-[30px] w-[30px]" fill="none" stroke="#1d1d1d">
          <circle cx="15" cy="15" r="15" fill="#fff" stroke="none" />
          <path d="M5.500 20.500V11L11.500 4.500M24.500 20.500V11L18.500 4.500" strokeWidth="1.6" />
          <path d="M9 23.500V11.500L14 6M21 23.500V11.500L16 6" strokeWidth="1.6" />
          <path d="M11 26V12.500L15 8.500l4 4V26l-4-4.500Z" fill="#1d1d1d" stroke="none" />
        </svg>
      </Task>
      <Task className="ml-[2px] w-[61px] bg-[#4b4b4b]" bar="left-0 w-full bg-[#76b9ed]">
        <svg viewBox="0 0 32 32" className="h-8 w-8">
          <path d="M14.500 15 2.500 8A14 14 0 0 1 27 8.500H14.500Z" fill="#ea4335" />
          <path d="M2.400 8.200A14 14 0 0 0 13.500 29L19 18 8.500 18Z" fill="#1aa260" />
          <path d="M27 8.500H15l5 9-6.500 11.500A14 14 0 0 0 27 8.500Z" fill="#fbc02d" />
          <circle cx="14.5" cy="15" r="6.3" fill="#fff" />
          <circle cx="14.5" cy="15" r="5" fill="#4285f4" />
          <circle cx="21.5" cy="22.5" r="9.5" fill="#4c3023" />
          <path d="M14 20.500h15M16 24.500h11" stroke="#7d6150" strokeWidth="1.2" />
        </svg>
      </Task>
      <Task className="ml-px w-[61px] bg-[#a66028]" bar="left-0 w-full bg-[#ff7a00]">
        <svg viewBox="0 0 24 30" className="mr-[3px] h-[30px] w-6">
          <path d="M1 8.500 12 0h4v6.500L8.500 9.500V20L1 23.500Z" fill="#a3101f" />
          <path d="M1 12v11.500L8.500 20V14Z" fill="#b93a86" />
          <path d="M15 0l8 3V26.500L15 30Z" fill="#dc3e0a" />
          <path d="M15 0l8 3v10l-8-6Z" fill="#f27408" />
          <path d="M4 22.500h11V30h-3Z" fill="#e8274b" />
        </svg>
      </Task>
      <svg viewBox="0 0 30 28" className="ml-[144px] h-7 w-[30px]">
        <circle cx="14" cy="14" r="13" fill="#0a93dc" stroke="#fff" strokeWidth="2" />
        <text x="14" y="21.5" textAnchor="middle" className="fill-white font-['Open_Sans'] text-[21px] font-bold">?</text>
        <circle cx="24" cy="21" r="6" fill="#f5a623" />
        <path d="M24 17v1.800M24 20v5" stroke="#fff" strokeWidth="1.8" />
      </svg>
      <svg viewBox="0 0 28 26" className="ml-[113px] h-[26px] w-[28px]">
        <circle cx="15" cy="12.5" r="12" fill="#fdb827" />
        <path d="M4 18q1-4 6-3 2-6 8-3 4 0 5 4 3 0 2 2Z" fill="#f3d9ae" />
        <path d="M1 18.500h26M4 21h19" stroke="#b58c60" strokeWidth="1.5" />
      </svg>
      <span className="ml-[11px] mt-[2px] text-[17px]">28°C</span>
      <span className="ml-[11px] mt-[2px] text-[17px]">Haze</span>
      <svg viewBox="0 0 180 26" className="ml-[20px] h-[26px] w-[180px]" fill="none" stroke="#fff" strokeWidth="1.4">
        <path d="M0 17 8 9l8 8" />
        <rect x="33" y="8.5" width="9" height="10" rx="1.5" />
        <path d="M42 12.500l4-2.500v7l-4-2.500M32 6.500q6-5 11 0M32 20.500q6 5 11 0" strokeWidth="1.2" />
        <rect x="64" y="2.5" width="8" height="14" rx="1.5" fill="#fff" stroke="none" />
        <path d="M61.500 13q0 6 6.500 6t6.500-6M68 19v3.500M64.500 22.500h7" strokeWidth="1.3" />
        <path d="M95 8h14v11H91V14M109.500 11h1.500v4h-1.500M88.500 6v4q2 3 4 0V6M90.500 11.500V16" strokeWidth="1.2" />
        <path d="M121 19Q122 8 135 6.500M124.500 21Q125.500 12 135 10.500M128.500 21Q129 15.500 135 14.500" strokeWidth="1.2" />
        <circle cx="133.5" cy="19.5" r="1.6" fill="#fff" stroke="none" />
        <path d="M148 10.500h3l4-4v13.500l-4-4h-3ZM158 10q2 3 0 6M161.500 8q3 5 0 10M165 6q5 7 0 14" strokeWidth="1.2" />
      </svg>
      <span className="ml-[2px] w-[29px] text-[14.5px] tracking-[-0.3px]">ENG</span>
      <div className="ml-[16px] flex w-[76px] flex-col items-center text-[14.5px] leading-[23px]">
        <span className="text-[13.8px]">17:26</span>
        <span>20-10-2021</span>
      </div>
      <div className="relative ml-[23px] h-[22px] w-[30px]">
        <svg viewBox="0 0 21 21" className="h-[21px] w-[21px]">
          <path d="M0 0h21v17H8l-4 4v-4H0Z" fill="#fff" />
          <path d="M4 4.500h13M4 8.500h13M4 12.500h9" stroke="#1d1d1d" strokeWidth="1.2" />
        </svg>
        <span className="absolute left-[9px] top-[9px] flex h-[21px] w-[21px] items-center justify-center rounded-full border border-[#8a8a8a] bg-[#303030] text-[14px]">
          7
        </span>
      </div>
      <span className="ml-auto mr-[5px] h-full w-px bg-[#6b6b6b]" />
    </div>
  );
}

export default function App() {
  return (
    <div className="flex h-[1080px] w-[1920px] flex-col overflow-hidden bg-white font-['Open_Sans',sans-serif]">
      <TabStrip />
      <AddressBar />
      <AppHeader />
      <AppToolbar />
      <div className="flex h-[750px]">
        <SchematicPane />
        <div className="flex w-1 items-center bg-[#dce1e5]">
          <span className="ml-px h-[25px] w-px bg-[#9aa1a5]" />
        </div>
        <GrapherPane />
      </div>
      <DownloadShelf />
      <Taskbar />
    </div>
  );
}
